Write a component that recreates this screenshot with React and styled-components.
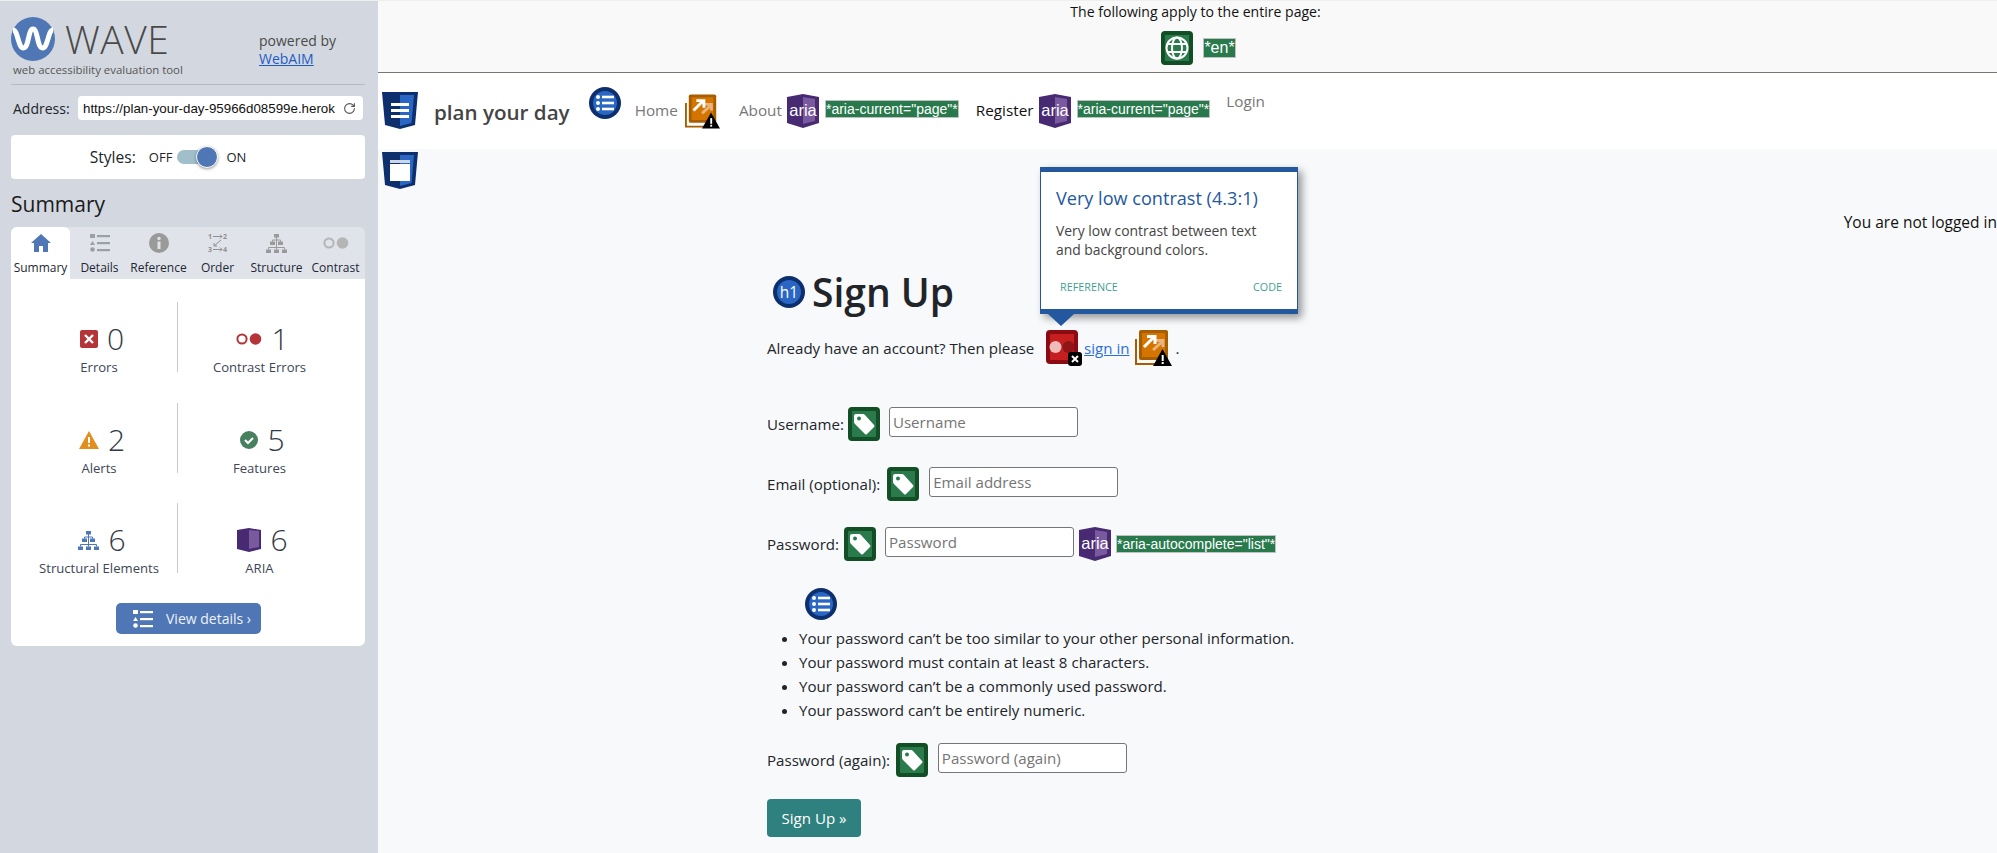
import React from "react";
import styled, { createGlobalStyle } from "styled-components";
import { RotateCw } from "lucide-react";

const GlobalStyle = createGlobalStyle`
  html, body {
    margin: 0;
    padding: 0;
    height: 100%;
    overflow: hidden;
  }
  * {
    box-sizing: border-box;
  }
`;

const Page = styled.div`
  display: flex;
  width: 1997px;
  height: 853px;
  overflow: hidden;
  border-top: 1px solid #eeeeee;
  font-family: "Open Sans", "Noto Sans", sans-serif;
  color: #212529;
  background: #f8f9fb;
`;

/* ---------- sidebar ---------- */

const Sidebar = styled.aside`
  flex: 0 0 378px;
  padding: 16px 13px 0 11px;
  background: #d3d8e0;
`;

const Brand = styled.div`
  display: flex;
  height: 68px;
  border-bottom: 1px solid #b5bac2;
`;

const BrandLeft = styled.div`
  flex: 0 0 248px;
`;

const LogoRow = styled.div`
  display: flex;
  align-items: center;
  gap: 10px;
  height: 44px;
`;

const WaveWord = styled.div`
  font-size: 39px;
  font-weight: 300;
  line-height: 44px;
  color: #4a4a4a;
  letter-spacing: 0.5px;
`;

const Tagline = styled.div`
  margin: 1px 0 0 2px;
  font-size: 11.4px;
  line-height: 16px;
  color: #555555;
`;

const Powered = styled.div`
  margin-top: 15px;
  font-size: 14px;
  line-height: 18px;
  color: #4a4a4a;
`;

const PoweredLink = styled.a`
  display: block;
  color: #1f5bc4;
  text-decoration: underline;
`;

const AddressRow = styled.div`
  display: flex;
  align-items: center;
  height: 24px;
  margin-top: 11px;
  padding-left: 2px;
  font-size: 14px;
`;

const AddressLabel = styled.span`
  flex: 0 0 65px;
`;

const AddressBox = styled.div`
  display: flex;
  flex: 0 0 285px;
  align-items: center;
  justify-content: space-between;
  height: 24px;
  padding: 0 7px 0 5px;
  border-radius: 4px;
  background: #ffffff;
  font-family: "Liberation Sans", Arial, sans-serif;
  font-size: 13.33px;
  color: #111111;
  white-space: nowrap;
`;

const StylesCard = styled.div`
  display: flex;
  align-items: center;
  justify-content: center;
  height: 44px;
  margin-top: 15px;
  padding-right: 40px;
  border-radius: 4px;
  background: #ffffff;
  font-size: 15.6px;
`;

const ToggleText = styled.span`
  margin-left: ${p => p.$left}px;
  font-size: 13px;
`;

const ToggleTrack = styled.div`
  position: relative;
  width: 38px;
  height: 14px;
  margin-left: 5px;
  border-radius: 7px;
  background: #a0bfca;
`;

const ToggleKnob = styled.div`
  position: absolute;
  top: -4px;
  right: -3px;
  width: 22px;
  height: 22px;
  border: 1px solid #ffffff;
  border-radius: 50%;
  background: #4f77b5;
  box-shadow: 0 1px 3px rgba(0, 0, 0, 0.4);
`;

const SummaryTitle = styled.h2`
  margin: 5px 0 0;
  font-size: 21px;
  font-weight: 400;
  line-height: 40px;
  color: #1b1b1b;
`;

const Tabs = styled.div`
  display: grid;
  grid-template-columns: repeat(6, 59px);
  height: 52px;
  margin-top: 3px;
  border-radius: 6px 6px 0 0;
  background: #e0e3e9;
`;

const Tab = styled.div`
  display: flex;
  flex-direction: column;
  align-items: center;
  height: 52px;
  padding-top: 6px;
  border-radius: 6px 6px 0 0;
  background: ${p => (p.$active ? "#ffffff" : "transparent")};
  font-size: 12px;
  color: #1d2733;
  white-space: nowrap;
`;

const TabIcon = styled.div`
  display: flex;
  align-items: center;
  justify-content: center;
  height: 20px;
`;

const TabLabel = styled.span`
  margin-top: 7px;
  line-height: 16px;
`;

const Panel = styled.div`
  height: 367px;
  padding-top: 23px;
  border-radius: 0 0 6px 6px;
  background: #ffffff;
`;

const StatGrid = styled.div`
  display: grid;
  grid-template-columns: 166px 188px;
  row-gap: 30.5px;
`;

const Stat = styled.div`
  display: flex;
  flex-direction: column;
  align-items: center;
  height: 70px;
  padding: ${p => (p.$right ? "0 24px 0 0" : "0 0 0 10px")};
  border-left: ${p => (p.$right ? "1px solid #c9c9c9" : "none")};
`;

const StatTop = styled.div`
  display: flex;
  align-items: center;
  gap: 9px;
  height: 40px;
  margin: 17px 0 -1px 6px;
`;

const StatNumber = styled.span`
  font-size: 30px;
  font-weight: 300;
  line-height: 40px;
  color: #333a45;
`;

const StatLabel = styled.span`
  font-size: 13.1px;
  line-height: 18px;
  color: #3c4656;
  white-space: nowrap;
`;

const DetailsButton = styled.div`
  display: flex;
  align-items: center;
  gap: 13px;
  width: 145px;
  height: 31px;
  margin: 30px 0 0 105px;
  padding-left: 17px;
  border-radius: 5px;
  background: #4f77b5;
  font-size: 14px;
  color: #eef2f8;
`;

/* ---------- page ---------- */

const Main = styled.main`
  position: relative;
  flex: 1;
  min-width: 0;
`;

const PageNotes = styled.div`
  display: flex;
  flex-direction: column;
  align-items: center;
  height: 72px;
  padding: 1px 0 0 16px;
  border-bottom: 1px solid #777770;
  background: #f9f9f9;
`;

const NoteText = styled.div`
  font-size: 14.05px;
  line-height: 20px;
  color: #111111;
`;

const NoteIcons = styled.div`
  display: flex;
  align-items: center;
  gap: 10px;
  margin: 9px 0 0 6px;
`;

const Nav = styled.nav`
  display: flex;
  align-items: flex-start;
  height: 76px;
  padding-left: 4px;
  background: #ffffff;
`;

const NavSlot = styled.div`
  flex: none;
  margin-left: ${p => p.$left || 0}px;
  margin-top: ${p => p.$top || 0}px;
  line-height: 0;
`;

const Brandname = styled.span`
  display: block;
  flex: none;
  margin: 26px 0 0 16px;
  font-size: 20.6px;
  font-weight: 600;
  line-height: 26px;
  color: #444444;
`;

const NavLink = styled.a`
  display: block;
  flex: none;
  margin-left: ${p => p.$left}px;
  margin-top: ${p => p.$top}px;
  font-size: 15.3px;
  line-height: 20px;
  color: ${p => (p.$active ? "#111111" : "#777777")};
`;

const AttrTag = styled.span`
  display: inline-block;
  flex: none;
  height: ${p => p.$h || 18}px;
  border: 1px solid #c0c0c0;
  background: #287a4c;
  font-family: "Liberation Sans", Arial, sans-serif;
  font-size: ${p => p.$size || 14}px;
  line-height: ${p => (p.$h || 18) - 2}px;
  color: #ffffff;
  white-space: nowrap;
`;

const Content = styled.div`
  padding-top: 3px;
`;

const StructureSlot = styled.div`
  height: 37px;
  margin-left: 4px;
  line-height: 0;
`;

const LoginStatus = styled.div`
  margin-top: 23px;
  font-size: 15.5px;
  line-height: 20px;
  text-align: right;
  color: #111111;
`;

const Form = styled.div`
  margin-left: 389px;
`;

const Heading = styled.h1`
  display: flex;
  align-items: center;
  gap: 7px;
  height: 46px;
  margin: 37px 0 0 6px;
  font-size: 39px;
  font-weight: 600;
  line-height: 46px;
  color: #212529;
`;

const Intro = styled.div`
  display: flex;
  align-items: center;
  height: 34px;
  margin-top: 16px;
  font-size: 15.1px;
  white-space: nowrap;
`;

const SignLink = styled.a`
  margin: 0 5px 0 2px;
  color: #2a6fe0;
  text-decoration: underline;
`;

const Field = styled.div`
  display: flex;
  align-items: center;
  gap: ${p => p.$gap || 6}px;
  height: 34px;
  margin-top: ${p => p.$top}px;
  font-size: 15.1px;
  white-space: nowrap;
`;

const TextInput = styled.input`
  width: 189px;
  height: 30px;
  margin: -4px 0 0 ${p => p.$left || 4}px;
  padding: 0 3px;
  border: 1px solid #767676;
  border-radius: 3px;
  background: #ffffff;
  font-family: "Open Sans", sans-serif;
  font-size: 15.1px;
  color: #212529;

  &::placeholder {
    color: #757575;
    opacity: 1;
  }
`;

const HelpIcon = styled.div`
  height: 32px;
  margin: 27px 0 0 38px;
  line-height: 0;
`;

const HelpList = styled.ul`
  margin: 6px 0 0;
  padding-left: 32px;
  font-size: 15.1px;
  line-height: 24px;
  white-space: nowrap;
`;

const SubmitButton = styled.button`
  display: block;
  width: 94px;
  height: 38px;
  margin-top: 22px;
  border: none;
  border-radius: 4px;
  background: #2e817e;
  font-family: "Open Sans", sans-serif;
  font-size: 15.1px;
  color: #ffffff;
`;

const Popup = styled.div`
  position: absolute;
  top: 166px;
  left: 662px;
  width: 258px;
  height: 147px;
  padding: 15px 15px 0;
  border: solid #23589f;
  border-width: 5px 1px 5px 1px;
  background: #ffffff;
  box-shadow: 4px 4px 8px rgba(0, 0, 0, 0.4);

  &::after {
    content: "";
    position: absolute;
    left: 7px;
    bottom: -17px;
    border-style: solid;
    border-width: 12px 13px 0;
    border-color: #23589f transparent transparent;
  }
`;

const PopupTitle = styled.div`
  font-size: 18.1px;
  line-height: 22px;
  color: #23589f;
`;

const PopupText = styled.div`
  margin-top: 12px;
  font-size: 13.9px;
  line-height: 19px;
  color: #444444;
`;

const PopupLinks = styled.div`
  display: flex;
  justify-content: space-between;
  margin-top: 20px;
  padding: 0 0 0 4px;
  font-size: 10.8px;
  line-height: 16px;
  color: #3f9f93;
`;

/* ---------- drawings ---------- */

const WaveLogo = () => (
  <svg width="44" height="44" viewBox="0 0 44 44">
    <circle cx="22" cy="22" r="22" fill="#4f77b5" />
    <path
      d="M2 13C7 13 7 31 12.5 31C18 31 17 12 22 12C27 12 26 31 31.5 31C37 31 37 13 42 13"
      fill="none"
      stroke="#fff"
      strokeWidth="5"
    />
  </svg>
);

const GreenBox = ({ children }) => (
  <svg width="32" height="34" viewBox="0 0 32 34" style={{ flex: "none" }}>
    <rect x="0" y="0" width="32" height="34" rx="4" fill="#124f26" />
    <rect x="4" y="4" width="24" height="26" fill="#2a7a4b" />
    {children}
  </svg>
);

const LabelIcon = () => (
  <GreenBox>
    <path d="M8 7H15Q16 7 17 8L26 18Q27 19 26 20L19 27Q18 28 17 27L7 17Q6 16 6 15V9Q6 7 8 7Z" fill="#fff" />
    <circle cx="11" cy="11.5" r="2" fill="#2a7a4b" />
  </GreenBox>
);

const GlobeIcon = () => (
  <GreenBox>
    <g fill="none" stroke="#fff" strokeWidth="2">
      <circle cx="16" cy="17" r="10.5" />
      <ellipse cx="16" cy="17" rx="5" ry="10.5" />
      <path d="M6 13H26M6 21H26" />
    </g>
  </GreenBox>
);

const AriaIcon = () => (
  <svg width="32" height="34" viewBox="0 0 32 34" style={{ flex: "none" }}>
    <path d="M0 3L16 0L32 3V29L16 34L0 29Z" fill="#472a71" />
    <path d="M16 3L28 5V27L16 30Z" fill="#7a5a9e" />
    <text x="16" y="22" textAnchor="middle" fontFamily="Liberation Sans, Arial, sans-serif" fontSize="16.5" fill="#fff">
      aria
    </text>
  </svg>
);

const ShieldIcon = ({ children }) => (
  <svg width="36" height="37" viewBox="0 0 36 37">
    <path d="M0 0H36L33 33L18 37L3 33Z" fill="#0d2f6e" />
    <path d="M18 3H32L29.5 31L18 34Z" fill="#2a66c4" />
    {children}
  </svg>
);

const RoundIcon = ({ children }) => (
  <svg width="32" height="32" viewBox="0 0 32 32" style={{ flex: "none" }}>
    <circle cx="16" cy="16" r="16" fill="#0d2f6e" />
    <circle cx="16" cy="16" r="12" fill="#2a66c4" />
    {children}
  </svg>
);

const ListRound = () => (
  <RoundIcon>
    <g fill="#fff">
      <circle cx="9" cy="10" r="2" />
      <circle cx="9" cy="16" r="2" />
      <circle cx="9" cy="22" r="2" />
      <rect x="13" y="8.7" width="12" height="2.6" />
      <rect x="13" y="14.7" width="12" height="2.6" />
      <rect x="13" y="20.7" width="12" height="2.6" />
    </g>
  </RoundIcon>
);

const H1Round = () => (
  <RoundIcon>
    <text x="16" y="21.5" textAnchor="middle" fontFamily="Open Sans, sans-serif" fontSize="15.5" fontWeight="400" fill="#fff">
      h1
    </text>
  </RoundIcon>
);

const LinkAlertIcon = ({ width = 37, height = 36 }) => (
  <svg width={width} height={height} viewBox="0 0 37 36" style={{ flex: "none" }}>
    <path d="M1 9V34H26" fill="none" stroke="#a85d00" strokeWidth="2" />
    <rect x="4" y="0" width="29" height="30" rx="2" fill="#a85d00" />
    <rect x="7" y="3" width="23" height="24" fill="#d47500" />
    <g fill="none" strokeWidth="3">
      <path d="M18 20L28 11M21 10.5H28V17" stroke="#eab27c" />
      <path d="M9 17L19 7M12 6.5H20V14" stroke="#fff" />
    </g>
    <path d="M27.5 19L37 36H18Z" fill="#000" />
    <rect x="26.7" y="25" width="2" height="6" fill="#fff" />
    <rect x="26.7" y="32" width="2" height="2" fill="#fff" />
  </svg>
);

const ContrastAlertIcon = () => (
  <svg width="36" height="36" viewBox="0 0 36 36" style={{ flex: "none" }}>
    <rect x="0" y="0" width="32" height="34" rx="4" fill="#8a0c12" />
    <rect x="4" y="4" width="24" height="26" fill="#c5201f" />
    <circle cx="9.5" cy="17" r="6" fill="#efbcbc" />
    <circle cx="22.5" cy="17" r="6" fill="#8f1518" />
    <rect x="22" y="22" width="14" height="14" rx="3" fill="#000" />
    <path d="M26 26L32 32M32 26L26 32" stroke="#fff" strokeWidth="2" />
  </svg>
);

const HouseIcon = () => (
  <svg width="20" height="20" viewBox="0 0 20 20">
    <path d="M10 1L20 10H17V19H12V13H8V19H3V10H0Z" fill="#4f77b5" />
  </svg>
);

const ListTabIcon = ({ color = "#9ba0a8", width = 20 }) => (
  <svg width={width} height="18" viewBox="0 0 20 18">
    <g fill={color}>
      <rect x="0" y="0" width="5" height="4" />
      <path d="M2.5 7L5 11H0Z" />
      <circle cx="2.5" cy="15.5" r="2.3" />
      <rect x="7" y="1" width="13" height="2.2" />
      <rect x="7" y="8" width="13" height="2.2" />
      <rect x="7" y="15" width="13" height="2.2" />
    </g>
  </svg>
);

const InfoIcon = () => (
  <svg width="20" height="20" viewBox="0 0 20 20">
    <circle cx="10" cy="10" r="10" fill="#9a9a9a" />
    <circle cx="10" cy="5.5" r="1.7" fill="#e0e3e9" />
    <rect x="8.5" y="8.5" width="3" height="7.5" fill="#e0e3e9" />
  </svg>
);

const OrderIcon = () => (
  <svg width="20" height="20" viewBox="0 0 20 20">
    <g fontFamily="Open Sans, sans-serif" fontSize="7" fontWeight="700" fill="#8f8f8f">
      <text x="0" y="6">1</text>
      <text x="15" y="6">2</text>
      <text x="0" y="19">3</text>
      <text x="15" y="19">4</text>
    </g>
    <path d="M5 3.5H14M12 1.5L14 3.5L12 5.5M5 16.5H14M12 14.5L14 16.5L12 18.5M13 7L6 13M6 10V13H9" fill="none" stroke="#8f8f8f" strokeWidth="1" />
  </svg>
);

const TreeIcon = ({ color = "#9a9a9a", width = 21 }) => (
  <svg width={width} height="19" viewBox="0 0 21 19">
    <g fill={color}>
      <rect x="8" y="0" width="5" height="3.5" />
      <rect x="4" y="7.5" width="5" height="3.5" />
      <rect x="12" y="7.5" width="5" height="3.5" />
      <rect x="0" y="15.5" width="5" height="3.5" />
      <rect x="8" y="15.5" width="5" height="3.5" />
      <rect x="16" y="15.5" width="5" height="3.5" />
    </g>
    <path d="M10.5 3V15.5M6.5 7.5V6H14.5V7.5M2.5 15.5V13.5H18.5V15.5" fill="none" stroke={color} strokeWidth="1" />
  </svg>
);

const ContrastDots = ({ strokeColor, fillColor, width = 26, height = 12 }) => (
  <svg width={width} height={height} viewBox="0 0 26 12">
    <circle cx="6" cy="6" r="4.6" fill="none" stroke={strokeColor} strokeWidth="2" />
    <circle cx="19.5" cy="6" r="5.8" fill={fillColor} />
  </svg>
);

const ErrorIcon = () => (
  <svg width="18" height="18" viewBox="0 0 18 18">
    <rect width="18" height="18" rx="2" fill="#b5343a" />
    <path d="M5 5L13 13M13 5L5 13" stroke="#fff" strokeWidth="2.4" />
  </svg>
);

const AlertIcon = () => (
  <svg width="20" height="18" viewBox="0 0 20 18">
    <path d="M10 0L20 18H0Z" fill="#e18e1f" />
    <rect x="9" y="6" width="2" height="6" fill="#fff" />
    <rect x="9" y="13.5" width="2" height="2" fill="#fff" />
  </svg>
);

const FeatureIcon = () => (
  <svg width="18" height="18" viewBox="0 0 18 18">
    <circle cx="9" cy="9" r="9" fill="#46805e" />
    <path d="M5 9L8 12L13 7" fill="none" stroke="#fff" strokeWidth="2" />
  </svg>
);

const AriaStatIcon = () => (
  <svg width="24" height="24" viewBox="0 0 24 24">
    <path d="M0 2L12 0L24 2V21L12 24L0 21Z" fill="#472a71" />
    <path d="M12 2L22 3V19L12 21Z" fill="#7a5a9e" />
  </svg>
);

const tabs = [
  { label: "Summary", icon: <HouseIcon />, active: true },
  { label: "Details", icon: <ListTabIcon /> },
  { label: "Reference", icon: <InfoIcon /> },
  { label: "Order", icon: <OrderIcon /> },
  { label: "Structure", icon: <TreeIcon /> },
  { label: "Contrast", icon: <ContrastDots strokeColor="#b5b5b5" fillColor="#b5b5b5" /> },
];

const stats = [
  { label: "Errors", value: 0, icon: <ErrorIcon /> },
  { label: "Contrast Errors", value: 1, icon: <ContrastDots strokeColor="#b5343a" fillColor="#b5343a" />, right: true },
  { label: "Alerts", value: 2, icon: <AlertIcon /> },
  { label: "Features", value: 5, icon: <FeatureIcon />, right: true },
  { label: "Structural Elements", value: 6, icon: <TreeIcon color="#4f77b5" /> },
  { label: "ARIA", value: 6, icon: <AriaStatIcon />, right: true },
];

const helpLines = [
  "Your password can\u2019t be too similar to your other personal information.",
  "Your password must contain at least 8 characters.",
  "Your password can\u2019t be a commonly used password.",
  "Your password can\u2019t be entirely numeric.",
];

const App = () => {
  return (
    <Page>
      <GlobalStyle />
      <Sidebar>
        <Brand>
          <BrandLeft>
            <LogoRow>
              <WaveLogo />
              <WaveWord>WAVE</WaveWord>
            </LogoRow>
            <Tagline>web accessibility evaluation tool</Tagline>
          </BrandLeft>
          <Powered>
            powered by
            <PoweredLink>WebAIM</PoweredLink>
          </Powered>
        </Brand>
        <AddressRow>
          <AddressLabel>Address:</AddressLabel>
          <AddressBox>
            https://plan-your-day-95966d08599e.herok
            <RotateCw size={13} color="#555" />
          </AddressBox>
        </AddressRow>
        <StylesCard>
          Styles:
          <ToggleText $left={13}>OFF</ToggleText>
          <ToggleTrack>
            <ToggleKnob />
          </ToggleTrack>
          <ToggleText $left={11}>ON</ToggleText>
        </StylesCard>
        <SummaryTitle>Summary</SummaryTitle>
        <Tabs>
          {tabs.map(tab => (
            <Tab key={tab.label} $active={tab.active}>
              <TabIcon>{tab.icon}</TabIcon>
              <TabLabel>{tab.label}</TabLabel>
            </Tab>
          ))}
        </Tabs>
        <Panel>
          <StatGrid>
            {stats.map(stat => (
              <Stat key={stat.label} $right={stat.right}>
                <StatTop>
                  {stat.icon}
                  <StatNumber>{stat.value}</StatNumber>
                </StatTop>
                <StatLabel>{stat.label}</StatLabel>
              </Stat>
            ))}
          </StatGrid>
          <DetailsButton>
            <ListTabIcon color="#ffffff" />
            View details ›
          </DetailsButton>
        </Panel>
      </Sidebar>

      <Main>
        <PageNotes>
          <NoteText>The following apply to the entire page:</NoteText>
          <NoteIcons>
            <GlobeIcon />
            <AttrTag $h={20} $size={16}>*en*</AttrTag>
          </NoteIcons>
        </PageNotes>

        <Nav>
          <NavSlot $top={19}>
            <ShieldIcon>
              <rect x="9" y="11" width="18" height="3" fill="#fff" />
              <rect x="9" y="17" width="18" height="3" fill="#fff" />
              <rect x="9" y="23" width="18" height="3" fill="#fff" />
            </ShieldIcon>
          </NavSlot>
          <Brandname>plan your day</Brandname>
          <NavSlot $left={19} $top={14}>
            <ListRound />
          </NavSlot>
          <NavLink $left={14} $top={27}>Home</NavLink>
          <NavSlot $left={7} $top={21}>
            <LinkAlertIcon width={35} height={35} />
          </NavSlot>
          <NavLink $left={19} $top={27}>About</NavLink>
          <NavSlot $left={5} $top={21}>
            <AriaIcon />
          </NavSlot>
          <NavSlot $left={6} $top={27}>
            <AttrTag>*aria-current="page"*</AttrTag>
          </NavSlot>
          <NavLink $left={17} $top={27} $active>Register</NavLink>
          <NavSlot $left={5} $top={21}>
            <AriaIcon />
          </NavSlot>
          <NavSlot $left={6} $top={27}>
            <AttrTag>*aria-current="page"*</AttrTag>
          </NavSlot>
          <NavLink $left={16} $top={18}>Login</NavLink>
        </Nav>

        <Content>
          <StructureSlot>
            <ShieldIcon>
              <rect x="8" y="8" width="20" height="3" fill="#cfd6e4" />
              <rect x="8" y="12" width="20" height="17" fill="#fff" />
            </ShieldIcon>
          </StructureSlot>
          <LoginStatus>You are not logged in</LoginStatus>
          <Form>
            <Heading>
              <H1Round />
              Sign Up
            </Heading>
            <Intro>
              Already have an account? Then please&nbsp;&nbsp;&nbsp;
              <ContrastAlertIcon />
              <SignLink>sign in</SignLink>
              <LinkAlertIcon />
              &nbsp;.
            </Intro>
            <Field $top={42} $gap={4.5}>
              Username:
              <LabelIcon />
              <TextInput placeholder="Username" />
            </Field>
            <Field $top={26} $gap={6.5}>
              Email (optional):
              <LabelIcon />
              <TextInput placeholder="Email address" />
            </Field>
            <Field $top={26} $gap={5}>
              Password:
              <LabelIcon />
              <TextInput placeholder="Password" />
              <AriaIcon />
              <AttrTag>*aria-autocomplete="list"*</AttrTag>
            </Field>
            <HelpIcon>
              <ListRound />
            </HelpIcon>
            <HelpList>
              {helpLines.map(line => (
                <li key={line}>{line}</li>
              ))}
            </HelpList>
            <Field $top={21}>
              Password (again):
              <LabelIcon />
              <TextInput placeholder="Password (again)" />
            </Field>
            <SubmitButton>Sign Up »</SubmitButton>
          </Form>
        </Content>

        <Popup>
          <PopupTitle>Very low contrast (4.3:1)</PopupTitle>
          <PopupText>
            Very low contrast between text
            <br />
            and background colors.
          </PopupText>
          <PopupLinks>
            <span>REFERENCE</span>
            <span>CODE</span>
          </PopupLinks>
        </Popup>
      </Main>
    </Page>
  );
};

export default App;
